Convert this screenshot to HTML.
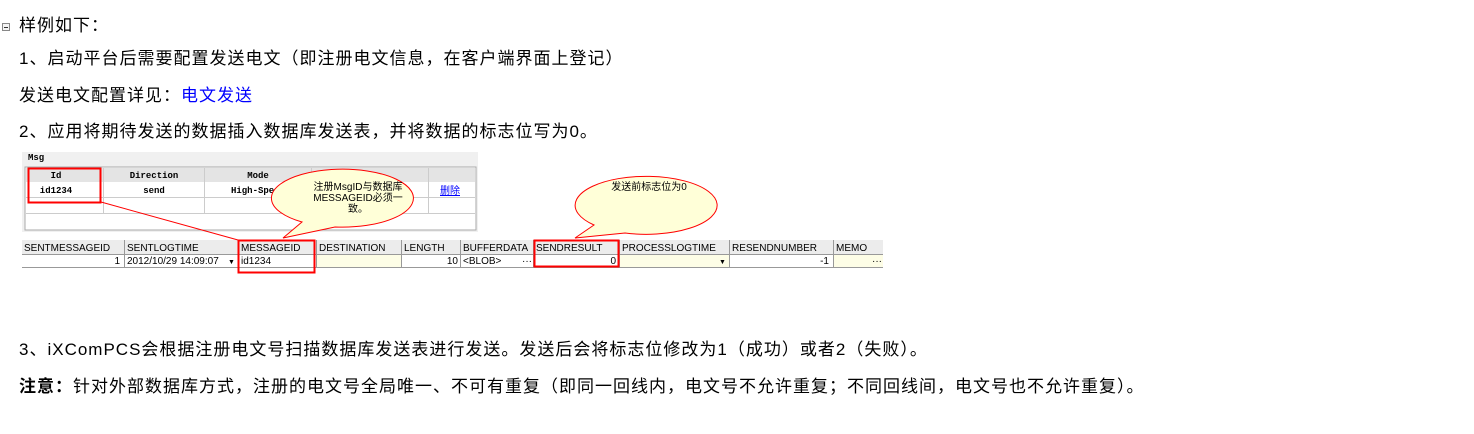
<!DOCTYPE html><html><head><meta charset="utf-8"><style>
body{margin:0;background:#fff;width:1474px;height:434px;position:relative;overflow:hidden;font-family:"Liberation Sans","Noto Sans CJK SC",sans-serif;color:#000}
.t{position:absolute;font-size:17px;letter-spacing:1px;white-space:nowrap;line-height:20px}
.c{position:absolute;box-sizing:border-box}
</style></head><body>
<div class="c" style="left:2px;top:23px;width:8px;height:8px;border:1px solid #888;background:#f4f4f4"><div style="position:absolute;left:1px;top:3px;width:4px;height:1px;background:#333"></div></div>
<div class="t" style="left:19px;top:16px">样例如下：</div>
<div class="t" style="left:19px;top:49px">1、启动平台后需要配置发送电文（即注册电文信息，在客户端界面上登记）</div>
<div class="t" style="left:19px;top:86px">发送电文配置详见：<span style="color:#00f">电文发送</span></div>
<div class="t" style="left:19px;top:122px">2、应用将期待发送的数据插入数据库发送表，并将数据的标志位写为0。</div>
<div class="t" style="left:19px;top:340px">3、iXComPCS会根据注册电文号扫描数据库发送表进行发送。发送后会将标志位修改为1（成功）或者2（失败）。</div>
<div class="t" style="left:19px;top:377px"><b>注意：</b>针对外部数据库方式，注册的电文号全局唯一、不可有重复（即同一回线内，电文号不允许重复；不同回线间，电文号也不允许重复）。</div>

<svg style="position:absolute;left:0;top:0" width="1474" height="434">
<rect x="22" y="152" width="456" height="80" fill="#f0f0f0"/>
<rect x="25" y="167" width="451" height="63" fill="#fff" stroke="#aaa"/>
<rect x="26" y="168" width="449" height="14" fill="#e4e4e4"/>
<g stroke="#ccc"><line x1="103.5" y1="168" x2="103.5" y2="213"/><line x1="204.5" y1="168" x2="204.5" y2="213"/><line x1="311.5" y1="168" x2="311.5" y2="213"/><line x1="428.5" y1="168" x2="428.5" y2="213"/><line x1="26" y1="197.5" x2="475" y2="197.5"/><line x1="26" y1="213.5" x2="475" y2="213.5"/></g>
<text x="28" y="160" font-family="Liberation Mono" font-size="9" font-weight="bold">Msg</text>
<g font-family="Liberation Mono" font-size="9" font-weight="bold" text-anchor="middle"><text x="56" y="178">Id</text><text x="154" y="178">Direction</text><text x="258" y="178">Mode</text></g>
<g font-family="Liberation Mono" font-size="9" font-weight="bold" text-anchor="middle"><text x="56" y="193">id1234</text><text x="154" y="193">send</text><text x="258" y="193">High-Speed</text></g>
<text x="440" y="194" font-size="10" fill="#00f" font-family="Noto Sans CJK SC" text-decoration="underline">删除</text>
<rect x="22" y="240" width="861" height="14" fill="#ececec"/>
<rect x="22" y="254" width="861" height="13" fill="#fff"/>
<rect x="317" y="254" width="84" height="13" fill="#fdfde6"/><rect x="620" y="254" width="109" height="13" fill="#fdfde6"/><rect x="834" y="254" width="49" height="13" fill="#fdfde6"/>
<g stroke="#999"><line x1="124.5" y1="240" x2="124.5" y2="267"/><line x1="238.5" y1="240" x2="238.5" y2="267"/><line x1="316.5" y1="240" x2="316.5" y2="267"/><line x1="401.5" y1="240" x2="401.5" y2="267"/><line x1="460.5" y1="240" x2="460.5" y2="267"/><line x1="533.5" y1="240" x2="533.5" y2="267"/><line x1="619.5" y1="240" x2="619.5" y2="267"/><line x1="729.5" y1="240" x2="729.5" y2="267"/><line x1="833.5" y1="240" x2="833.5" y2="267"/><line x1="22" y1="254.5" x2="883" y2="254.5"/><line x1="22" y1="267.5" x2="883" y2="267.5"/></g>
<g font-size="10" font-family="Liberation Sans"><text x="24" y="251">SENTMESSAGEID</text><text x="127" y="251">SENTLOGTIME</text><text x="241" y="251">MESSAGEID</text><text x="319" y="251">DESTINATION</text><text x="404" y="251">LENGTH</text><text x="463" y="251">BUFFERDATA</text><text x="536" y="251">SENDRESULT</text><text x="622" y="251">PROCESSLOGTIME</text><text x="732" y="251">RESENDNUMBER</text><text x="836" y="251">MEMO</text>
<text x="120" y="264" text-anchor="end">1</text><text x="127" y="264">2012/10/29 14:09:07</text><text x="228" y="264" font-size="7">▼</text><text x="241" y="264">id1234</text><text x="458" y="264" text-anchor="end">10</text><text x="463" y="264">&lt;BLOB&gt;</text><text x="522" y="264">···</text><text x="616" y="264" text-anchor="end">0</text><text x="719" y="264" font-size="7">▼</text><text x="829" y="264" text-anchor="end">-1</text><text x="872" y="264">···</text></g>
<g fill="none" stroke="#f00"><rect x="28.5" y="168.5" width="72" height="34" stroke-width="2"/><rect x="238.5" y="240.5" width="76" height="32" stroke-width="2"/><rect x="534.5" y="240.5" width="84" height="26" stroke-width="2"/><line x1="101" y1="202" x2="238" y2="240"/></g>
<path d="M302,222 A71,29 0 1 1 335,227 L283,238 Z" fill="#ffffd8" stroke="#f00"/>
<path d="M594,225 A71,29 0 1 1 625,233 L575,238 Z" fill="#ffffd8" stroke="#f00"/>
<g font-size="10" font-family="Liberation Sans,Noto Sans CJK SC" text-anchor="middle"><text x="358" y="190">注册MsgID与数据库</text><text x="358" y="201">MESSAGEID必须一</text><text x="358" y="212">致。</text><text x="649" y="190">发送前标志位为0</text></g>
</svg>
</body></html>
